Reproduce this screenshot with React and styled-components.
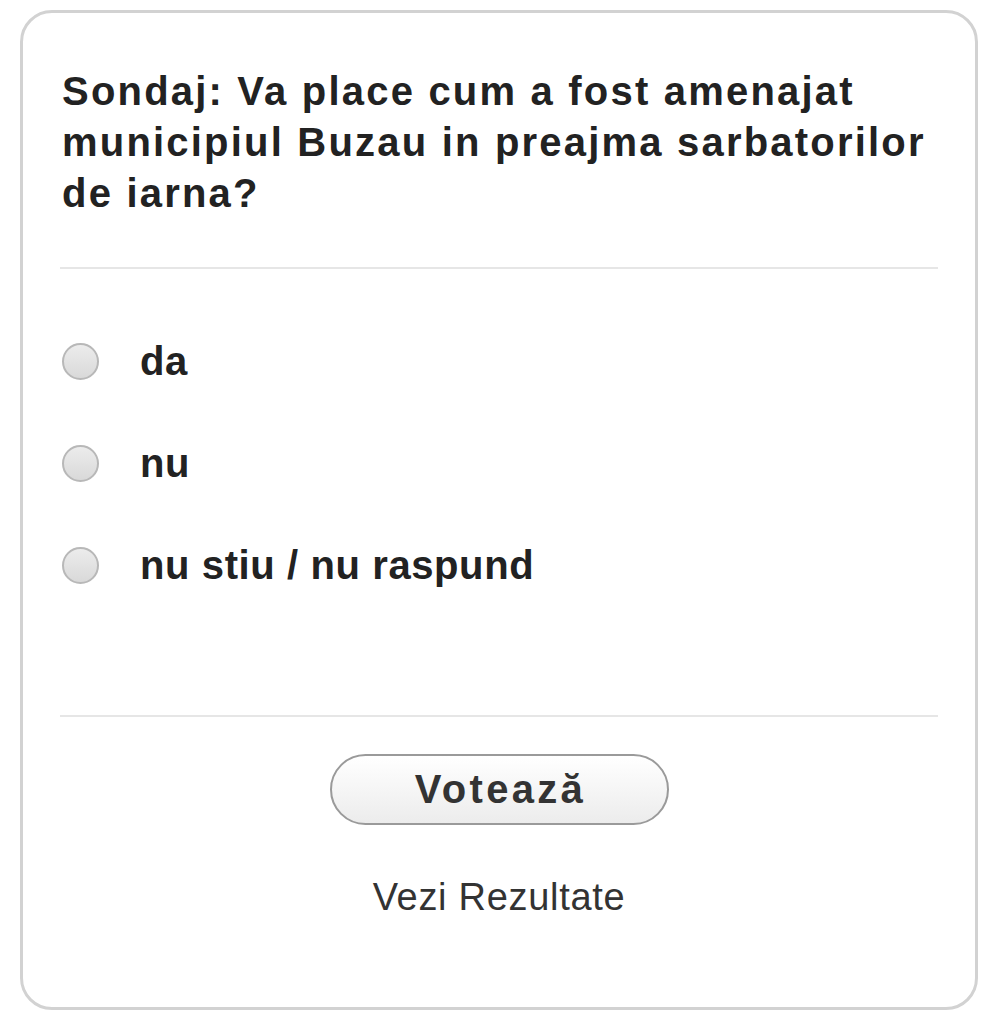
import React from "react";
import styled, { createGlobalStyle } from "styled-components";

const Global = createGlobalStyle`
  html, body { margin: 0; padding: 0; background: #fff; }
  body { font-family: "Liberation Sans", Arial, sans-serif; }
`;

const Card = styled.div`
  box-sizing: border-box;
  width: 958px;
  height: 1000px;
  margin: 10px 0 0 20px;
  border: 3px solid #d2d2d2;
  border-radius: 32px;
  padding: 53px 37px 0 37px;
  display: flex;
  flex-direction: column;
`;

const Title = styled.h2`
  margin: 0 0 0 2px;
  font-size: 40px;
  line-height: 51px;
  font-weight: bold;
  letter-spacing: 2.2px;
  color: #222;
`;

const Divider = styled.div`
  height: 2px;
  background: #e6e6e6;
  margin-top: ${(p) => p.$top}px;
`;

const Options = styled.div`
  display: flex;
  flex-direction: column;
  margin-top: 41px;
  margin-left: 2px;
`;

const Option = styled.label`
  display: flex;
  align-items: center;
  height: 102px;
  gap: 41px;
  cursor: pointer;
`;

const Radio = styled.span`
  box-sizing: border-box;
  width: 37px;
  height: 37px;
  border-radius: 50%;
  border: 2px solid #b8b8b8;
  background: linear-gradient(#ececec, #d9d9d9);
  flex-shrink: 0;
`;

const OptionText = styled.span`
  font-size: 40px;
  font-weight: bold;
  letter-spacing: 0.6px;
  color: #222;
`;

const Footer = styled.div`
  display: flex;
  flex-direction: column;
  align-items: center;
  margin-top: 37px;
`;

const VoteButton = styled.button`
  box-sizing: border-box;
  width: 339px;
  height: 71px;
  border-radius: 36px;
  border: 2px solid #9a9a9a;
  background: linear-gradient(#ffffff, #ececec);
  font-family: "Liberation Sans", Arial, sans-serif;
  font-size: 40px;
  font-weight: bold;
  letter-spacing: 3.3px;
  color: #333;
  padding: 0 0 0 3px;
  cursor: pointer;
`;

const ResultsLink = styled.a`
  margin-top: 50px;
  font-size: 38px;
  line-height: 44px;
  letter-spacing: 0.7px;
  color: #333;
  text-decoration: none;
`;

const options = ["da", "nu", "nu stiu / nu raspund"];

export default function App() {
  return (
    <>
      <Global />
      <Card>
        <Title>
          Sondaj: Va place cum a fost amenajat municipiul Buzau in preajma
          sarbatorilor de iarna?
        </Title>
        <Divider $top={48} />
        <Options>
          {options.map((o) => (
            <Option key={o}>
              <Radio />
              <OptionText>{o}</OptionText>
            </Option>
          ))}
        </Options>
        <Divider $top={99} />
        <Footer>
          <VoteButton>Votează</VoteButton>
          <ResultsLink href="#">Vezi Rezultate</ResultsLink>
        </Footer>
      </Card>
    </>
  );
}
